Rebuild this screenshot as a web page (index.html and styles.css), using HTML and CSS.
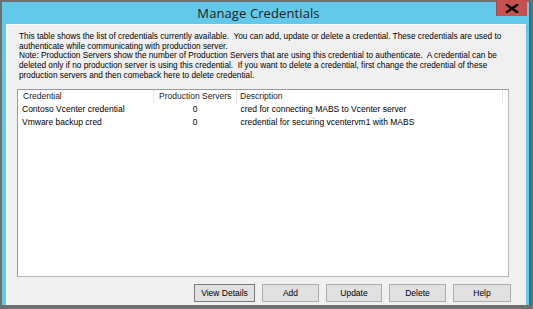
FILE: index.html
```html
<!DOCTYPE html>
<html lang="en">
<head>
    <meta charset="UTF-8">
    <title>Manage Credentials</title>
    <link rel="stylesheet" href="styles.css">
</head>
<body>
    <div class="window">
        <div class="titlebar">
            <span class="title">Manage Credentials</span>
            <div class="close">
                <svg width="14" height="9" viewBox="0 0 14 9">
                    <path d="M2 1 L12 8 M12 1 L2 8" stroke="#000" stroke-width="2.4" stroke-linecap="square"/>
                </svg>
            </div>
        </div>
        <div class="content">
            <p class="info">This table shows the list of credentials currently available.&nbsp; You can add, update or delete a credential. These credentials are used to authenticate while communicating with production server.<br>
            Note: Production Servers show the number of Production Servers that are using this credential to authenticate.&nbsp; A credential can be deleted only if no production server is using this credential.&nbsp; If you want to delete a credential, first change the credential of these production servers and then comeback here to delete credential.</p>

            <div class="list">
                <table>
                    <thead>
                        <tr>
                            <th class="col-name">Credential</th>
                            <th class="col-count">Production Servers</th>
                            <th class="col-desc">Description</th>
                            <th class="col-fill"></th>
                        </tr>
                    </thead>
                    <tbody>
                        <tr>
                            <td>Contoso Vcenter credential</td>
                            <td class="num">0</td>
                            <td>cred for connecting MABS to Vcenter server</td>
                            <td></td>
                        </tr>
                        <tr>
                            <td>Vmware backup cred</td>
                            <td class="num">0</td>
                            <td>credential for securing vcentervm1 with MABS</td>
                            <td></td>
                        </tr>
                    </tbody>
                </table>
            </div>

            <div class="buttons">
                <button class="btn btn-default view">View Details</button>
                <button class="btn add">Add</button>
                <button class="btn update">Update</button>
                <button class="btn delete">Delete</button>
                <button class="btn help">Help</button>
            </div>
        </div>
    </div>
</body>
</html>
```

FILE: styles.css
```css
html, body {
    margin: 0;
    padding: 0;
}
body {
    width: 533px;
    height: 309px;
    overflow: hidden;
    background: #6f6f6f;
    font-family: "Liberation Sans", Arial, sans-serif;
}
.window {
    margin: 2px 0 0 2px;
    width: 527px;
    height: 303px;
    background: #63c9ea;
    border-right: 2px solid #2f7282;
    display: flex;
    flex-direction: column;
}
.titlebar {
    position: relative;
    height: 22px;
    display: flex;
    align-items: center;
    justify-content: center;
    padding-right: 14px;
}
.title {
    font-family: "Open Sans", "Noto Sans", sans-serif;
    font-size: 13px;
    color: #1e1e1e;
    letter-spacing: 0.1px;
}
.close {
    position: absolute;
    top: -2px;
    left: 494px;
    width: 30px;
    height: 16px;
    background: #c75050;
    border-left: 1px solid #b04545;
    display: flex;
    align-items: center;
    justify-content: center;
}
.close svg {
    display: block;
}
.content {
    flex: 1;
    margin: 0 3px 0 4px;
    background: #f0f0f0;
    border-top: 1px solid #fbfbfb;
    border-left: 1px solid #fbfbfb;
    padding: 7px 17px 3px 10px;
    display: flex;
    flex-direction: column;
}
.info {
    margin: 0 0 0 2px;
    font-size: 8.25px;
    line-height: 9.7px;
    color: #000;
}
.list {
    flex: 1;
    margin-top: 8px;
    background: #fff;
    border: 1px solid #9a9a9a;
    border-right-color: #b8b8b8;
    border-bottom-color: #b8b8b8;
}
table {
    border-collapse: collapse;
    width: 100%;
    table-layout: fixed;
    font-size: 8.5px;
    color: #000;
}
th {
    height: 13px;
    padding: 0 0 0 5px;
    font-weight: normal;
    text-align: left;
    border-right: 1px solid #e5e5e5;
    color: #1a1a1a;
    white-space: nowrap;
}
th.col-fill {
    border-right: none;
}
.col-name {
    width: 130px;
}
.col-count {
    width: 77px;
    padding-left: 5px;
}
.col-desc {
    width: 262px;
    padding-left: 3px;
}
td {
    height: 13px;
    padding: 0 0 0 4px;
    white-space: nowrap;
}
td:nth-child(3) {
    padding-left: 4px;
}
td.num {
    text-align: center;
    padding: 0;
}
.buttons {
    display: flex;
    justify-content: flex-end;
    gap: 7px;
    margin: 7px -2px 0 0;
}
.btn {
    height: 18px;
    padding: 0;
    font-family: "Liberation Sans", Arial, sans-serif;
    font-size: 8.5px;
    color: #000;
    background: #e1e1e1;
    border: 1px solid #adadad;
}
.btn-default {
    border: 1px solid #7a7a7a;
}
.view { width: 61px; }
.add { width: 57px; }
.update { width: 56px; }
.delete { width: 57px; }
.help { width: 58px; }
```
